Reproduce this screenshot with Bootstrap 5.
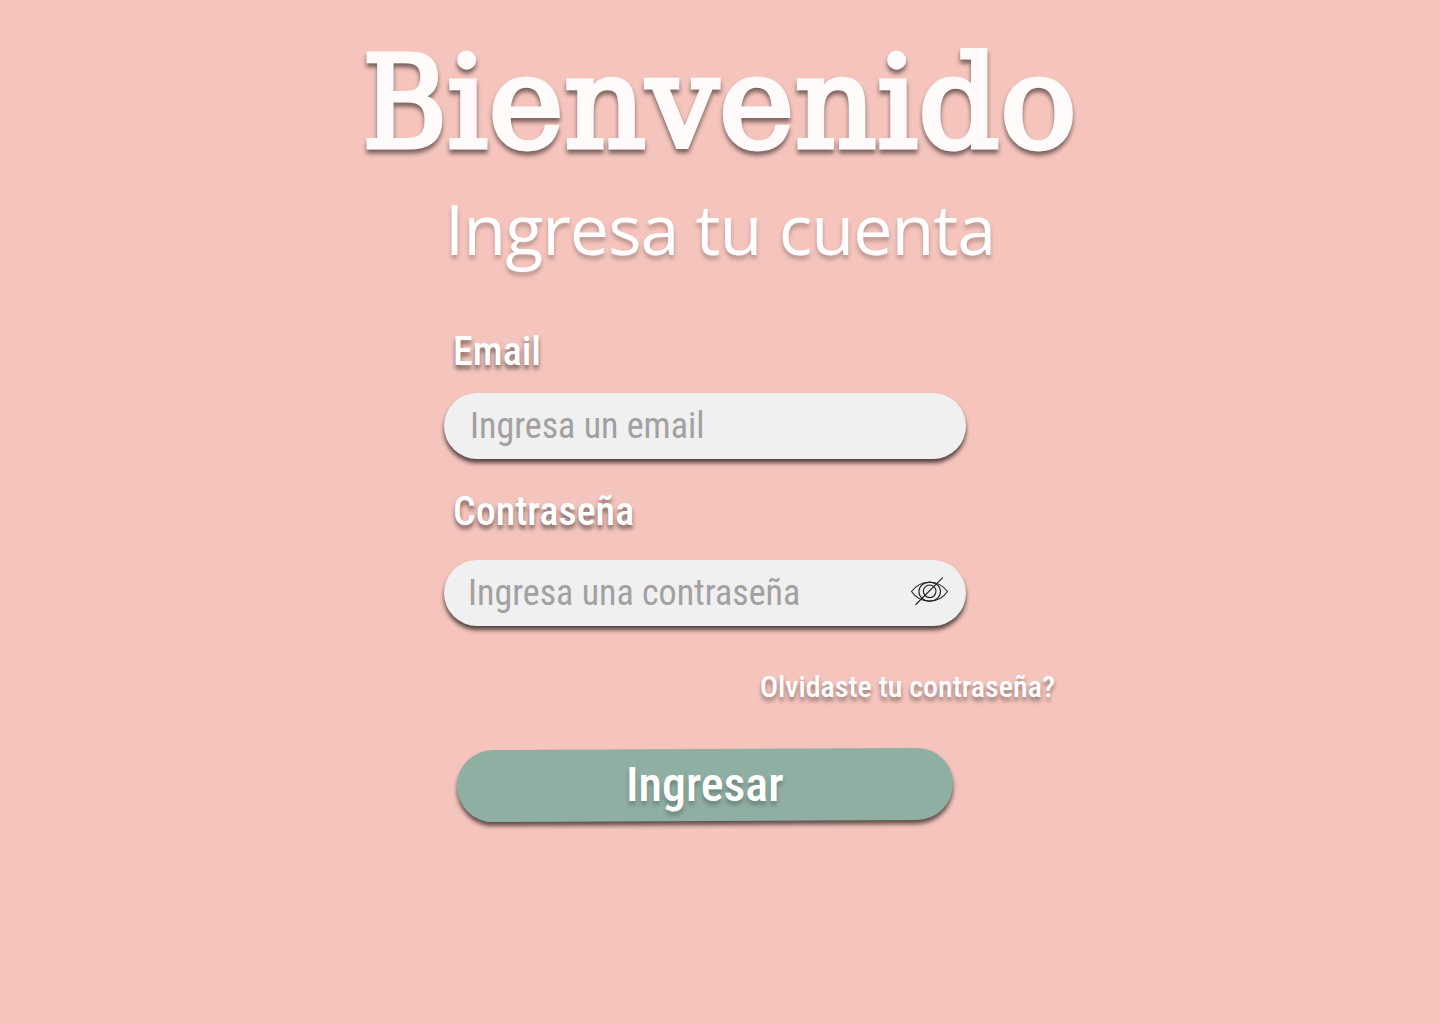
<!DOCTYPE html>
<html lang="es">
<head>
<meta charset="utf-8">
<meta name="viewport" content="width=device-width, initial-scale=1">
<title>Bienvenido</title>
<link rel="stylesheet" href="https://cdn.jsdelivr.net/npm/bootstrap@5.3.0/dist/css/bootstrap.min.css">
<style>
body{background:#f5c4bd;font-family:"Roboto Condensed",Roboto,sans-serif;min-height:1024px}
.welcome{font:400 127px/148px "DejaVu Serif",serif;color:#fffbfa;-webkit-text-stroke:5px #fffbfa;letter-spacing:.6px;padding-top:29px;white-space:nowrap;filter:drop-shadow(0 4px 2px rgba(0,0,0,.5))}
.welcome::first-letter{font-family:"DejaVu Serif Condensed","DejaVu Serif",serif}
.subtitle{font:400 70px/96px "Open Sans",sans-serif;letter-spacing:-1px;text-shadow:0 4px 4px rgba(0,0,0,.25);margin-top:3px}
.login{width:522px;margin-left:444px;margin-top:52px}
.login .form-label{font-size:40px;font-weight:500;line-height:47px;margin:0;padding-left:9px;text-shadow:0 4px 4px rgba(0,0,0,.5)}
.pill{height:66px;background:#f0f0f0;box-shadow:0 4px 4px rgba(0,0,0,.65)}
.pill .form-control{font-size:36px;line-height:66px;color:#555;box-shadow:none}
.pill .form-control::placeholder{color:#a3a0a0;opacity:1}
.pill-email{margin:18px 0 29px;padding-left:26px}
.pill-pass{margin-top:25px;padding-left:24px;padding-right:17px}
.forgot{font-size:30px;font-weight:500;line-height:35px;margin:43px -89px 0 0;text-shadow:0 4px 4px rgba(0,0,0,.4)}
.enter{width:496px;height:72px;margin:45px 0 0 13px;background:#8fafa2;transform:rotate(-.3deg);box-shadow:0 4px 4px rgba(0,0,0,.6);font-size:48px;font-weight:500;line-height:56px}
.enter:hover{background:#84a598}
.enter span{transform:rotate(.3deg);text-shadow:0 4px 4px rgba(0,0,0,.25)}
</style>
</head>
<body>
<main class="d-flex flex-column">
  <h1 class="welcome text-center m-0">Bienvenido</h1>
  <p class="subtitle text-center text-white mb-0">Ingresa tu cuenta</p>
  <form class="login d-flex flex-column">
    <label class="form-label text-white" for="email">Email</label>
    <div class="pill pill-email rounded-pill d-flex align-items-center">
      <input id="email" type="email" class="form-control border-0 bg-transparent p-0" placeholder="Ingresa un email">
    </div>
    <label class="form-label text-white" for="pass">Contraseña</label>
    <div class="pill pill-pass rounded-pill d-flex align-items-center">
      <input id="pass" type="password" class="form-control border-0 bg-transparent p-0" placeholder="Ingresa una contraseña">
      <button type="button" class="btn p-0 border-0 lh-1 flex-shrink-0" aria-label="Mostrar contraseña">
        <svg class="d-block" width="39" height="32" viewBox="0 0 39 32" fill="none" stroke="#222" stroke-width="1.1" stroke-linecap="round">
          <path d="M1.500 14.500C6 8.500 12 5.200 19.500 5.200S33 8.500 37.500 14.500C33 21 27 24.200 19.500 24.200S6 21 1.500 14.500Z"/>
          <ellipse cx="19.700" cy="14.600" rx="10.800" ry="9.500"/>
          <circle cx="19.700" cy="14.300" r="6.300"/>
          <path d="M5.800 27.500L32.500 .8"/>
        </svg>
      </button>
    </div>
    <a href="#" class="forgot align-self-end text-white text-decoration-none text-nowrap">Olvidaste tu contraseña?</a>
    <button type="button" class="enter btn rounded-pill border-0 text-white p-0 d-flex align-items-center justify-content-center"><span>Ingresar</span></button>
  </form>
</main>
<script src="https://cdn.jsdelivr.net/npm/bootstrap@5.3.0/dist/js/bootstrap.bundle.min.js"></script>
</body>
</html>
